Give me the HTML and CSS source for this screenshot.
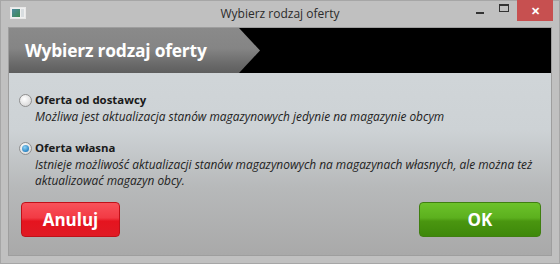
FILE: index.html
```html
<!DOCTYPE html>
<html>
<head>
<meta charset="utf-8">
<link rel="stylesheet" href="styles.css">
</head>
<body>
<div class="window">
  <div class="titlebar">
    <div class="appicon"><span class="ai-a"></span><span class="ai-b"></span></div>
    <div class="title">Wybierz rodzaj oferty</div>
    <div class="controls">
      <div class="ctl min"><span></span></div>
      <div class="ctl max"><span></span></div>
      <div class="ctl close">&#x2715;</div>
    </div>
  </div>
  <div class="client">
    <div class="header">
      <div class="ribbon">Wybierz rodzaj oferty</div>
    </div>
    <div class="body">
      <div class="options">
        <div class="option">
          <div class="radio"></div>
          <div class="opt-text">
            <div class="opt-label">Oferta od dostawcy</div>
            <div class="opt-desc">Możliwa jest aktualizacja stanów magazynowych jedynie na magazynie obcym</div>
          </div>
        </div>
        <div class="option">
          <div class="radio checked"><span></span></div>
          <div class="opt-text">
            <div class="opt-label">Oferta własna</div>
            <div class="opt-desc">Istnieje możliwość aktualizacji stanów magazynowych na magazynach własnych, ale można też aktualizować magazyn obcy.</div>
          </div>
        </div>
      </div>
      <div class="buttons">
        <button class="btn cancel">Anuluj</button>
        <button class="btn ok">OK</button>
      </div>
    </div>
  </div>
</div>
</body>
</html>
```
FILE: styles.css
```css
* { box-sizing: border-box; }
html, body { margin: 0; padding: 0; }
body { font-family: "Open Sans", "Noto Sans", sans-serif; }
.window {
  width: 560px;
  height: 264px;
  background: #c0c0c0;
  border: 1px solid #a6a6a6;
  display: flex;
  flex-direction: column;
}
.titlebar {
  height: 26px;
  display: flex;
  align-items: flex-start;
  position: relative;
}
.appicon {
  margin: 6px 0 0 9px;
  width: 16px;
  height: 12px;
  border: 1px solid #e8e8e8;
  background: #f0f0f0;
  display: flex;
  padding: 1px;
  gap: 1px;
}
.ai-a { width: 8px; background: linear-gradient(135deg, #4f8aa0, #3b8a52); }
.ai-b { flex: 1; background: #d8dde0; }
.title {
  position: absolute;
  left: 0; right: 0;
  top: 4px;
  text-align: center;
  font-family: "Open Sans", sans-serif;
  font-size: 12px;
  color: #2b2b2b;
}
.controls {
  margin-left: auto;
  margin-right: 6px;
  display: flex;
  position: relative;
}
.ctl { height: 20px; display: flex; align-items: center; justify-content: center; }
.min { width: 22px; }
.min span { width: 8px; height: 2px; background: #333; margin-top: 4px; }
.max { width: 26px; }
.max span { width: 10px; height: 8px; border: 1px solid #333; border-top-width: 2px; margin-top: -6px; }
.close {
  width: 36px;
  background: #c75050;
  color: #fff;
  font-size: 11px;
  font-weight: bold;
  margin-top: -1px;
  height: 21px;
}
.client {
  margin: 0 7px 7px 7px;
  flex: 1;
  border: 1px solid #9e9e9e;
  display: flex;
  flex-direction: column;
  background: linear-gradient(#d3d8db 0%, #cdd2d5 45%, #b7b9ba 70%, #a9a9a9 100%);
}
.header {
  height: 45px;
  background: #000;
}
.ribbon {
  width: 251px;
  height: 45px;
  clip-path: polygon(0 0, 230px 0, 100% 50%, 230px 100%, 0 100%);
  background: linear-gradient(#8a8a8a 0%, #858585 45%, #6a6a6a 80%, #5e5e5e 100%);
  color: #fff;
  font-family: "Open Sans", sans-serif;
  font-weight: bold;
  font-size: 17.4px;
  padding-left: 16px;
  line-height: 44px;
  letter-spacing: -0.2px;
}
.body {
  flex: 1;
  display: flex;
  flex-direction: column;
  padding: 18px 10px 0 10px;
}
.options { display: flex; flex-direction: column; gap: 15px; }
.option { display: flex; gap: 3px; }
.radio {
  flex: 0 0 13px;
  width: 13px;
  height: 13px;
  border-radius: 50%;
  border: 1px solid #8f8f8f;
  background: radial-gradient(circle at 40% 35%, #ffffff, #e2e2e2 60%, #cacaca);
  margin-top: 3px;
  display: flex;
  align-items: center;
  justify-content: center;
}
.radio.checked span {
  width: 7px; height: 7px; border-radius: 50%;
  background: radial-gradient(circle at 40% 35%, #8fd2f5, #2b85c4 70%, #1c5f95);
}
.opt-text { display: flex; flex-direction: column; flex: 1; min-width: 0; }
.opt-label {
  font-weight: bold;
  font-size: 11.4px;
  color: #1a1a1a;
  line-height: 16px;
  padding-top: 1px;
}
.opt-desc {
  font-style: italic;
  font-size: 11.9px;
  color: #222;
  line-height: 16px;
}
.buttons {
  margin-top: auto;
  margin-bottom: 18px;
  display: flex;
  justify-content: space-between;
  padding: 0 0 0 2px;
}
.btn {
  height: 35px;
  border-radius: 4px;
  color: #fff;
  font-family: "Open Sans", sans-serif;
  font-weight: bold;
  font-size: 17px;
  cursor: pointer;
}
.cancel {
  width: 99px;
  border: 1px solid #c01018;
  background: linear-gradient(#f8525a 0%, #f23a44 45%, #e5141f 55%, #e01a24 100%);
}
.ok {
  width: 122px;
  border: 1px solid #3f7f10;
  background: linear-gradient(#6cc22a 0%, #5cb01e 45%, #4a9610 55%, #3e880a 100%);
}
```
